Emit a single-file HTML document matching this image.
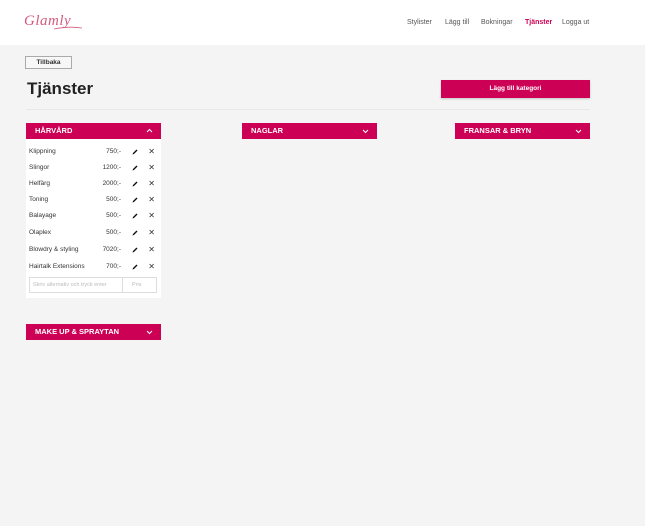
<!DOCTYPE html>
<html><head><meta charset="utf-8"><style>
*{box-sizing:border-box;margin:0;padding:0}
body{width:645px;height:526px;background:#f4f4f4;font-family:"Liberation Sans","DejaVu Sans",sans-serif;position:relative;overflow:hidden;color:#333}
.hdr{position:absolute;left:0;top:0;width:645px;height:45px;background:#fff}
.logo{position:absolute;left:24px;top:13px;font-family:"Liberation Serif",serif;font-style:italic;color:#d35a7e;font-size:15px;letter-spacing:.5px}
.nav{position:absolute;top:19px;font-size:7px;color:#555}
.btn-back{position:absolute;left:25px;top:56px;width:47px;height:13px;border:1px solid #aaa;background:#f7f7f7;font-size:6.5px;font-weight:bold;text-align:center;line-height:11px;color:#333}
h1{position:absolute;left:27px;top:79px;font-size:17px;font-weight:bold;color:#222}
.add{position:absolute;left:441px;top:80px;width:149px;height:18px;background:#cc0055;color:#fff;font-size:6.5px;font-weight:bold;text-align:center;line-height:18px;box-shadow:0 1px 2px rgba(0,0,0,.2)}
.line{position:absolute;left:26px;top:109px;width:564px;height:1px;background:#e8e8e8}
.cat{position:absolute;height:16px;background:#cc0055;color:#fff;font-size:7.5px;font-weight:bold;line-height:16px;padding-left:9px}
.cat svg{position:absolute;right:8px;top:5px}
.card{position:absolute;left:26px;top:139px;width:135px;height:159px;background:#fff}
.row{position:absolute;left:3px;width:128px;font-size:6.5px;color:#333}
.row .p{position:absolute;right:36px}
.row .e{position:absolute;right:19px;top:1px}
.row .x{position:absolute;right:2px;top:-1px;font-size:8px}
.inp{position:absolute;left:3px;top:138px;width:128px;height:16px;border:1px solid #ddd;font-size:5.5px;color:#bbb;line-height:14px}
</style></head><body>
<div class="hdr">
<div class="logo">Glamly</div>
<svg style="position:absolute;left:24px;top:20px" width="60" height="20"><path d="M30 9 Q45 6 58 8" stroke="#d35a7e" stroke-width=".8" fill="none"/></svg>
<span class="nav" style="left:407px">Stylister</span>
<span class="nav" style="left:445px">Lägg till</span>
<span class="nav" style="left:481px">Bokningar</span>
<span class="nav" style="left:525px;color:#cc0055;font-weight:bold">Tjänster</span>
<span class="nav" style="left:562px">Logga ut</span>
</div>
<div class="btn-back">Tillbaka</div>
<h1>Tjänster</h1>
<div class="add">Lägg till kategori</div>
<div class="line"></div>
<div class="cat" style="left:26px;top:123px;width:135px">HÅRVÅRD<svg width="7" height="6"><path d="M1 4L3.5 1.5L6 4" stroke="#fff" fill="none"/></svg></div>
<div class="cat" style="left:242px;top:123px;width:135px">NAGLAR<svg width="7" height="6"><path d="M1 2L3.5 4.5L6 2" stroke="#fff" fill="none"/></svg></div>
<div class="cat" style="left:455px;top:123px;width:135px">FRANSAR &amp; BRYN<svg width="7" height="6"><path d="M1 2L3.5 4.5L6 2" stroke="#fff" fill="none"/></svg></div>
<div class="cat" style="left:26px;top:324px;width:135px">MAKE UP &amp; SPRAYTAN<svg width="7" height="6"><path d="M1 2L3.5 4.5L6 2" stroke="#fff" fill="none"/></svg></div>
<div class="card">
<div class="row" style="top:9px">Klippning<span class="p">750;-</span><svg class="e" width="6" height="6"><path d="M0.5 5.5L1 4L4.5 0.5L5.5 1.5L2 5Z" fill="#111"/></svg><span class="x">✕</span></div>
<div class="row" style="top:25px">Slingor<span class="p">1200;-</span><svg class="e" width="6" height="6"><path d="M0.5 5.5L1 4L4.5 0.5L5.5 1.5L2 5Z" fill="#111"/></svg><span class="x">✕</span></div>
<div class="row" style="top:41px">Helfärg<span class="p">2000;-</span><svg class="e" width="6" height="6"><path d="M0.5 5.5L1 4L4.5 0.5L5.5 1.5L2 5Z" fill="#111"/></svg><span class="x">✕</span></div>
<div class="row" style="top:57px">Toning<span class="p">500;-</span><svg class="e" width="6" height="6"><path d="M0.5 5.5L1 4L4.5 0.5L5.5 1.5L2 5Z" fill="#111"/></svg><span class="x">✕</span></div>
<div class="row" style="top:73px">Balayage<span class="p">500;-</span><svg class="e" width="6" height="6"><path d="M0.5 5.5L1 4L4.5 0.5L5.5 1.5L2 5Z" fill="#111"/></svg><span class="x">✕</span></div>
<div class="row" style="top:90px">Olaplex<span class="p">500;-</span><svg class="e" width="6" height="6"><path d="M0.5 5.5L1 4L4.5 0.5L5.5 1.5L2 5Z" fill="#111"/></svg><span class="x">✕</span></div>
<div class="row" style="top:107px">Blowdry &amp; styling<span class="p">7020;-</span><svg class="e" width="6" height="6"><path d="M0.5 5.5L1 4L4.5 0.5L5.5 1.5L2 5Z" fill="#111"/></svg><span class="x">✕</span></div>
<div class="row" style="top:124px">Hairtalk Extensions<span class="p">700;-</span><svg class="e" width="6" height="6"><path d="M0.5 5.5L1 4L4.5 0.5L5.5 1.5L2 5Z" fill="#111"/></svg><span class="x">✕</span></div>
<div class="inp"><span style="position:absolute;left:3px">Skriv alternativ och tryck enter</span><span style="position:absolute;left:92px;top:-1px;width:1px;height:15px;background:#ddd"></span><span style="position:absolute;left:102px">Pris</span></div>
</div>
</body></html>
